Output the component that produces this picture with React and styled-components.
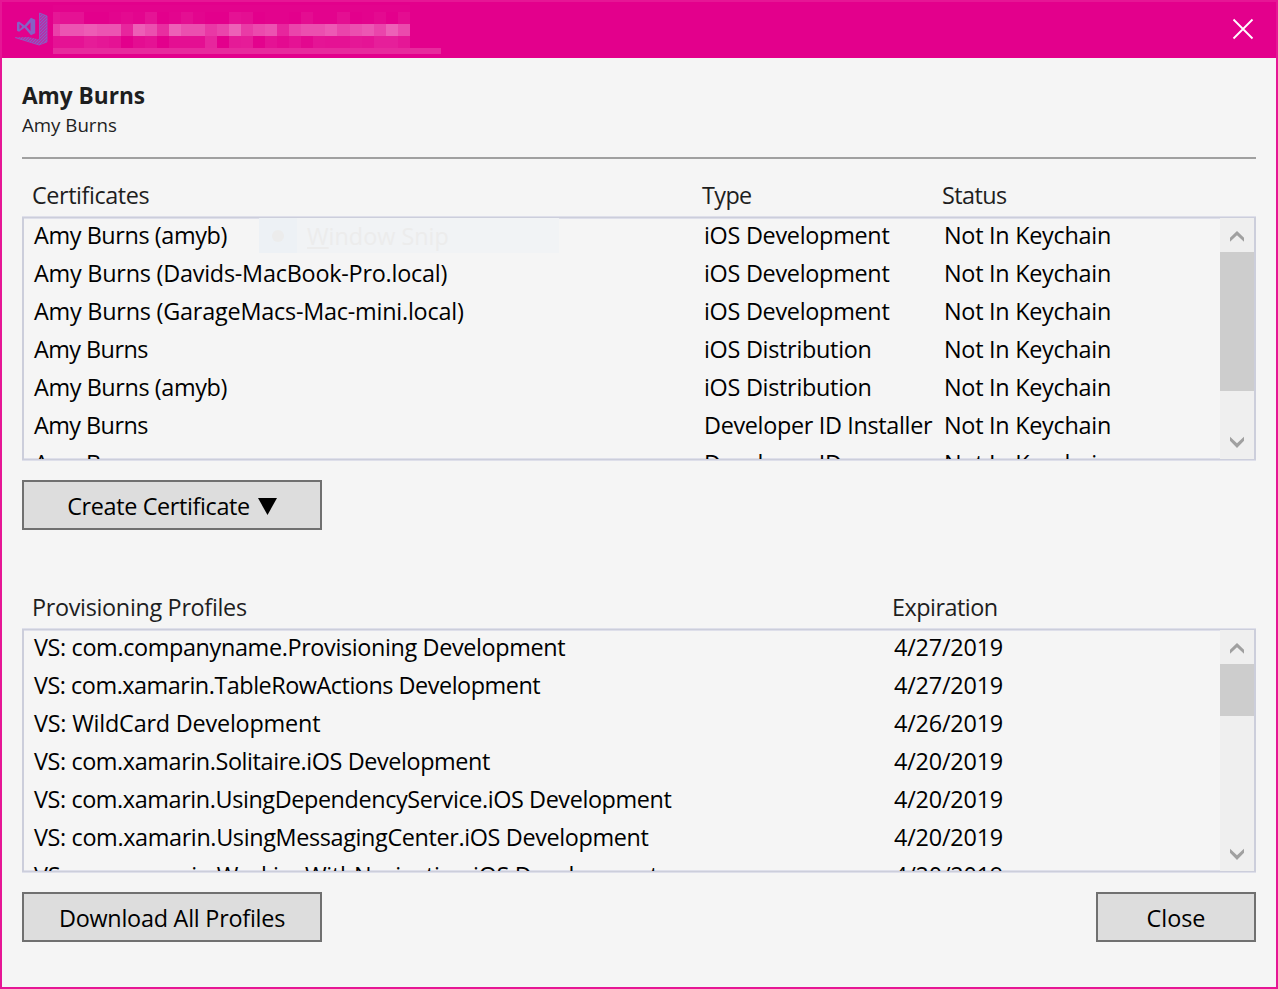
import React from "react";
import styled, { createGlobalStyle } from "styled-components";

const GlobalStyle = createGlobalStyle`
  * { box-sizing: border-box; }
  body { margin: 0; background: #f5f5f5; }
`;

const Window = styled.main`
  width: 1278px;
  height: 989px;
  display: flex;
  flex-direction: column;
  border: 2px solid #e61695;
  background: #f5f5f5;
  color: #1e1e1e;
  font-family: "Open Sans", "Noto Sans", sans-serif;
  font-size: 23.4px;
  line-height: 38px;
  overflow: hidden;
`;

const TitleBar = styled.header`
  display: flex;
  justify-content: space-between;
  align-items: flex-start;
  flex: none;
  height: 56px;
  padding: 3px 22px 0 13px;
  background: #e3008c;
`;

const Brand = styled.div`
  display: flex;
`;

const Logo = styled.svg`
  width: 34px;
  height: 34px;
  margin: 7px 4px 0 0;
`;

const Mosaic = styled.div`
  display: grid;
  grid-template-columns: 7.4px repeat(29, 12.05px) 31px;
  grid-template-rows: 7px 12px 12px 12px 6px;
`;

const Cell = styled.i`
  background: rgba(255, 255, 255, ${(p) => p.$level / 100});
`;

const Strip = styled.i`
  grid-column: 1 / -1;
  background: #e72b9d;
`;

const CloseIcon = styled.svg`
  width: 22px;
  height: 22px;
  margin-top: 13px;
`;

const Body = styled.div`
  display: flex;
  flex-direction: column;
  padding: 0 20px;
`;

const Account = styled.section`
  display: flex;
  flex-direction: column;
  height: 101px;
  padding-top: 22px;
  border-bottom: 2px solid #a0a0a0;
`;

const TeamName = styled.h1`
  margin: 0;
  font-size: 22.65px;
  font-weight: 700;
  line-height: 32px;
`;

const UserName = styled.span`
  font-size: 18.7px;
  line-height: 26px;
`;

const Columns = styled.div`
  display: grid;
  grid-template-columns: ${(p) => p.$columns};
  height: 38px;
  white-space: nowrap;
`;

const Head = styled(Columns)`
  margin-top: ${(p) => p.$gap}px;
  height: 41px;
  padding-left: 10px;
`;

const ListBox = styled.div`
  position: relative;
  display: flex;
  height: 243px;
  border: solid #cccedb;
  border-width: 1px 2px;
  box-shadow: 0 -1px #dedfea, 0 1px #dedfea, inset 0 1px #dedfea, inset 0 -1px #dedfea;
  color: #000;
  overflow: hidden;
`;

const Rows = styled.div`
  flex: 1;
  padding-left: 10px;
  margin-top: -2px;
`;

const Text = styled.span`
  letter-spacing: ${(p) => p.$track || 0}px;
`;

const ScrollBar = styled.div`
  display: flex;
  flex-direction: column;
  width: 34px;
  background: #efefef;
`;

const ScrollArrow = styled.svg`
  flex: none;
  width: 34px;
  height: 34px;
`;

const Track = styled.div`
  flex: 1;
`;

const Thumb = styled.div`
  height: ${(p) => p.$size}px;
  background: #cdcdcd;
`;

const GhostMenu = styled.div`
  position: absolute;
  left: 235px;
  top: 0;
  display: flex;
  width: 300px;
  height: 35px;
  background: #f1f3f5;
  color: #ececec;
  line-height: 36px;
`;

const GhostMark = styled.div`
  display: flex;
  align-items: center;
  justify-content: center;
  width: 38px;
  margin-right: 10px;
  background: #edf1f5;

  &::after {
    content: "";
    width: 12px;
    height: 12px;
    border-radius: 50%;
    background: #ececec;
  }
`;

const Actions = styled.div`
  display: flex;
  justify-content: space-between;
  margin-top: 20px;
`;

const Button = styled.button`
  display: flex;
  align-items: center;
  justify-content: center;
  gap: 8px;
  width: ${(p) => p.$width}px;
  height: 50px;
  padding: 2px 0 0;
  border: 2px solid #707070;
  background: #ddd;
  color: #000;
  font: inherit;
  letter-spacing: ${(p) => p.$track || 0}px;
`;

const mosaicRows = [
  [1, 1, 1, 1, 1, 1, 1, 1, 1, 1, 1, 1, 1, 1, 1, 1, 1, 1, 1, 1, 1, 1, 1, 1, 1, 1, 1, 1, 1, 1],
  [9, 7, 7, 0, 0, 2, 4, 2, 8, 0, 2, 6, 2, 0, 0, 7, 6, 0, 1, 1, 0, 5, 1, 1, 6, 0, 1, 4, 0, 5],
  [25, 33, 33, 36, 33, 33, 15, 37, 31, 18, 38, 31, 31, 22, 27, 38, 23, 29, 32, 15, 27, 31, 31, 35, 27, 31, 34, 27, 38, 29],
  [7, 7, 7, 11, 9, 7, 0, 5, 7, 0, 6, 6, 6, 15, 0, 10, 11, 1, 7, 4, 7, 3, 8, 7, 7, 9, 8, 12, 12, 9],
];

const certificates = [
  ["Amy Burns (amyb)", -0.4, "iOS Development", -0.28],
  ["Amy Burns (Davids-MacBook-Pro.local)", -0.23, "iOS Development", -0.28],
  ["Amy Burns (GarageMacs-Mac-mini.local)", -0.22, "iOS Development", -0.28],
  ["Amy Burns", -0.55, "iOS Distribution", -0.28],
  ["Amy Burns (amyb)", -0.4, "iOS Distribution", -0.28],
  ["Amy Burns", -0.55, "Developer ID Installer", -0.33],
  ["Amy Burns", -0.55, "Developer ID", -0.33],
];

const profiles = [
  ["VS: com.companyname.Provisioning Development", -0.36, "4/27/2019"],
  ["VS: com.xamarin.TableRowActions Development", -0.47, "4/27/2019"],
  ["VS: WildCard Development", -0.2, "4/26/2019"],
  ["VS: com.xamarin.Solitaire.iOS Development", -0.4, "4/20/2019"],
  ["VS: com.xamarin.UsingDependencyService.iOS Development", -0.4, "4/20/2019"],
  ["VS: com.xamarin.UsingMessagingCenter.iOS Development", -0.36, "4/20/2019"],
  ["VS: com.xamarin.WorkingWithNavigation.iOS Development", -0.32, "4/20/2019"],
];

function Scroller({ size }) {
  return (
    <ScrollBar>
      <ScrollArrow viewBox="0 0 34 34">
        <path d="M10 23.700V19.800L17 13l7 6.800v3.900l-7-6.500z" fill="#a0a0a0" />
      </ScrollArrow>
      <Track>
        <Thumb $size={size} />
      </Track>
      <ScrollArrow viewBox="0 0 34 34">
        <path d="M10 11.700v4.100L17 23l7-7.200v-4.100l-7 6.600z" fill="#a0a0a0" />
      </ScrollArrow>
    </ScrollBar>
  );
}

export default function App() {
  return (
    <Window>
      <GlobalStyle />
      <TitleBar>
        <Brand>
          <Logo viewBox="0 0 34 34">
            <defs>
              <pattern id="hatch" width="3" height="3" patternUnits="userSpaceOnUse">
                <path d="M-1 1 1-1M0 3 3 0M2 4 4 2" stroke="#8661c5" strokeWidth="1.4" />
              </pattern>
            </defs>
            <path
              d="M2 10.500l2-1 5.500 4L16 5.700l4.200 2v13.600l-4.200 2-6.500-7.500-5.500 4-2-1zM4.500 12v5.500L7.300 14.700zM15.500 10.500l-4 4.200 4 4.300z"
              fill="#8661c5"
              fillRule="evenodd"
            />
            <path d="M24.500 1L32 4v26l-8 3L0 25.500l13-.5 11.500 2.500z" fill="url(#hatch)" />
            <path d="M24.500 27.500V1L32 4v26l-8 3L0 25.500" fill="none" stroke="#8661c5" strokeWidth="0.8" />
          </Logo>
          <Mosaic>
            {mosaicRows.map((row, r) =>
              [...row, 0].map((level, c) => <Cell key={`${r}-${c}`} $level={level} />)
            )}
            <Strip />
          </Mosaic>
        </Brand>
        <CloseIcon viewBox="0 0 22 22">
          <path d="M1.500 1.500l19 19M20.500 1.500l-19 19" stroke="#fff" strokeWidth="1.8" />
        </CloseIcon>
      </TitleBar>
      <Body>
        <Account>
          <TeamName>Amy Burns</TeamName>
          <UserName>Amy Burns</UserName>
        </Account>
        <Head $columns="670px 240px 1fr" $gap={17}>
          <Text $track={-0.42}>Certificates</Text>
          <Text $track={-0.6}>Type</Text>
          <Text $track={-0.55}>Status</Text>
        </Head>
        <ListBox>
          <GhostMenu>
            <GhostMark />
            <Text><u>W</u>indow Snip</Text>
          </GhostMenu>
          <Rows>
            {certificates.map(([name, nameTrack, type, typeTrack], i) => (
              <Columns key={i} $columns="670px 240px 1fr">
                <Text $track={nameTrack}>{name}</Text>
                <Text $track={typeTrack}>{type}</Text>
                <Text $track={-0.27}>Not In Keychain</Text>
              </Columns>
            ))}
          </Rows>
          <Scroller size={139} />
        </ListBox>
        <Actions>
          <Button $width={300} $track={-0.36}>
            Create Certificate
            <svg width="19" height="17" viewBox="0 0 19 17">
              <path d="M0 0h19L9.500 17z" />
            </svg>
          </Button>
        </Actions>
        <Head $columns="860px 1fr" $gap={58}>
          <Text $track={-0.32}>Provisioning Profiles</Text>
          <Text $track={-0.5}>Expiration</Text>
        </Head>
        <ListBox>
          <Rows>
            {profiles.map(([name, nameTrack, date]) => (
              <Columns key={name} $columns="860px 1fr">
                <Text $track={nameTrack}>{name}</Text>
                <Text $track={-0.2}>{date}</Text>
              </Columns>
            ))}
          </Rows>
          <Scroller size={52} />
        </ListBox>
        <Actions>
          <Button $width={300} $track={-0.24}>Download All Profiles</Button>
          <Button $width={160}>Close</Button>
        </Actions>
      </Body>
    </Window>
  );
}
